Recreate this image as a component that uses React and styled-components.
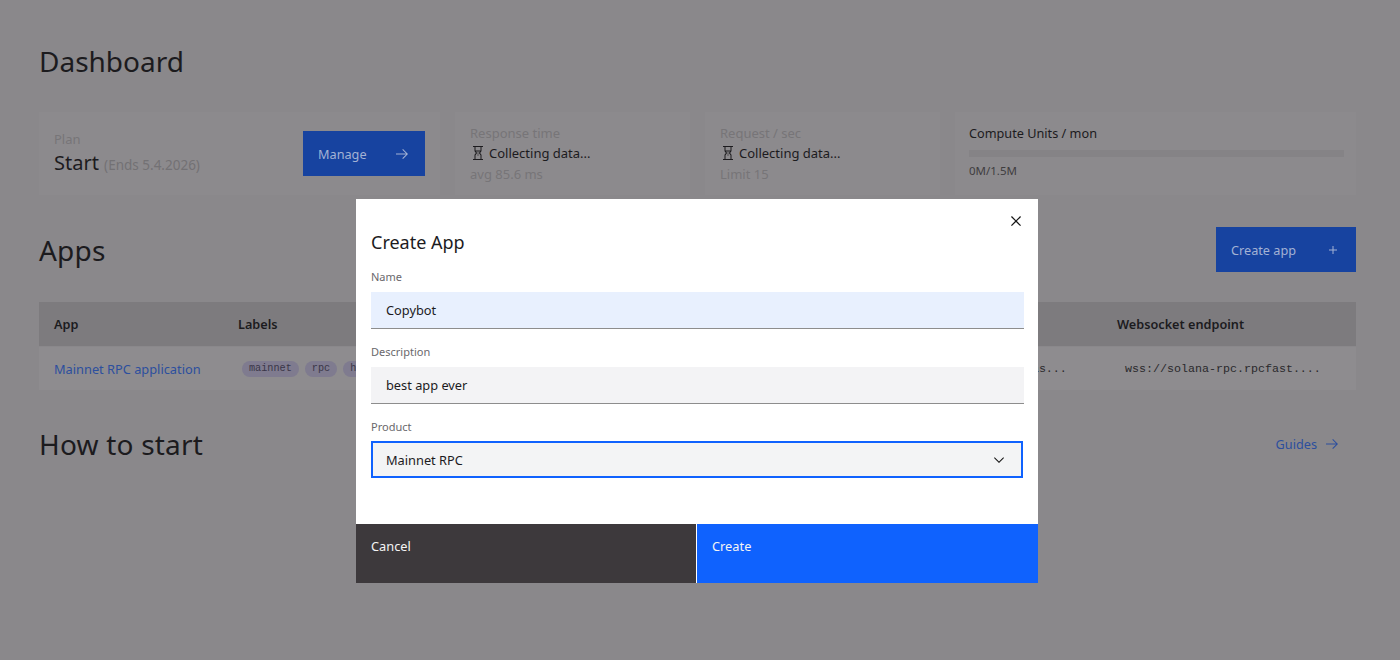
import React from "react";
import styled, { createGlobalStyle } from "styled-components";

const font = `"Noto Sans", "Liberation Sans", sans-serif`;
const mono = `"Liberation Mono", "DejaVu Sans Mono", monospace`;

const Global = createGlobalStyle`
  html, body { margin: 0; padding: 0; height: 100%; }
  body { background: #8a888b; font-family: ${font}; overflow: hidden; }
  * { box-sizing: border-box; }
`;

function Icon({ d, size = 16, color = "currentColor" }) {
  return (
    <svg width={size} height={size} viewBox="0 0 32 32" fill={color} aria-hidden="true">
      <path d={d} />
    </svg>
  );
}

const ARROW = "M18 6L16.57 7.393 24.15 15 4 15 4 17 24.15 17 16.57 24.573 18 26 28 16 18 6z";
const ADD = "M17 15V8h-2v7H8v2h7v7h2v-7h7v-2z";
const CLOSE = "M24 9.4L22.6 8 16 14.6 9.4 8 8 9.4 14.6 16 8 22.6 9.4 24 16 17.4 22.6 24 24 22.6 17.4 16 24 9.4z";
const CHEVRON = "M16 22L6 12l1.4-1.4 8.6 8.6 8.6-8.6L26 12z";
const HOURGLASS = "M15 19h2v2h-2zM15 15h2v2h-2zM23 11.67V4h3V2H6v2h3v7.67a2 2 0 00.4 1.2L11.75 16 9.4 19.13a2 2 0 00-.4 1.2V28H6v2h20v-2h-3v-7.67a2 2 0 00-.4-1.2L20.25 16l2.35-3.13a2 2 0 00.4-1.2zM21 4v7H11V4zm0 16.33V28H11v-7.67L14.25 16 12 13h8l-2.25 3z";

function App() {
  return (
    <>
      <Global />
      <Page>
        <PageTitle>Dashboard</PageTitle>
        <Stats>
          <PlanCard>
            <div>
              <Dim>Plan</Dim>
              <PlanName>
                Start <PlanEnds>(Ends 5.4.2026)</PlanEnds>
              </PlanName>
            </div>
            <BlueButton>
              Manage <Icon d={ARROW} />
            </BlueButton>
          </PlanCard>
          <Card>
            <Dim>Response time</Dim>
            <Collecting>
              <Icon d={HOURGLASS} /> Collecting data...
            </Collecting>
            <LastDim>avg 85.6 ms</LastDim>
          </Card>
          <Card>
            <Dim>Request / sec</Dim>
            <Collecting>
              <Icon d={HOURGLASS} /> Collecting data...
            </Collecting>
            <LastDim>Limit 15</LastDim>
          </Card>
          <ComputeCard>
            <ComputeTitle>Compute Units / mon</ComputeTitle>
            <Progress />
            <ComputeValue>0M/1.5M</ComputeValue>
          </ComputeCard>
        </Stats>

        <SectionHead>
          <SectionTitle>Apps</SectionTitle>
          <BlueButton $wide>
            Create app <Icon d={ADD} />
          </BlueButton>
        </SectionHead>

        <TableHead>
          <span>App</span>
          <span>Labels</span>
          <span>Http endpoint</span>
          <span>Websocket endpoint</span>
        </TableHead>
        <TableRow>
          <AppLink>Mainnet RPC application</AppLink>
          <Labels>
            <Tag>mainnet</Tag>
            <Tag>rpc</Tag>
            <Tag>http</Tag>
          </Labels>
          <Endpoint>https://solana-rpc.rpcfas...</Endpoint>
          <Endpoint>wss://solana-rpc.rpcfast....</Endpoint>
        </TableRow>

        <StartHead>
          <SectionTitle>How to start</SectionTitle>
          <Guides>
            Guides <Icon d={ARROW} />
          </Guides>
        </StartHead>
      </Page>

      <Overlay>
        <Modal>
          <ModalBody>
            <CloseButton>
              <Icon d={CLOSE} size={20} color="#161616" />
            </CloseButton>
            <ModalTitle>Create App</ModalTitle>
            <FieldLabel>Name</FieldLabel>
            <TextField $autofill>Copybot</TextField>
            <FieldLabel>Description</FieldLabel>
            <TextField>best app ever</TextField>
            <FieldLabel>Product</FieldLabel>
            <SelectField>
              Mainnet RPC
              <Icon d={CHEVRON} color="#161616" />
            </SelectField>
          </ModalBody>
          <ModalFooter>
            <FooterButton $kind="cancel">Cancel</FooterButton>
            <FooterButton $kind="create">Create</FooterButton>
          </ModalFooter>
        </Modal>
      </Overlay>
    </>
  );
}

export default App;

const Page = styled.main`
  width: 1400px;
  height: 660px;
  padding: 39px 44px 0 39px;
  color: #1c1b1e;
`;

const PageTitle = styled.h1`
  margin: 0;
  font-size: 28px;
  line-height: 45px;
  font-weight: 400;
`;

const Stats = styled.section`
  display: grid;
  grid-template-columns: 401px 235px 235px 1fr;
  gap: 15px;
  margin-top: 28px;
`;

const Card = styled.div`
  height: 83px;
  padding: 11px 15px;
  background: #8c8a8d;
  font-size: 13px;
  line-height: 20px;
`;

const PlanCard = styled(Card)`
  display: flex;
  justify-content: space-between;
  align-items: center;
  padding: 0 15px;
`;

const Dim = styled.div`
  color: #777578;
  font-size: 13px;
  line-height: 20px;
`;

const LastDim = styled(Dim)`
  margin-top: 1px;
`;

const PlanName = styled.div`
  font-size: 20px;
  line-height: 28px;
  color: #1c1b1e;
`;

const PlanEnds = styled.span`
  font-size: 13.5px;
  color: #737174;
`;

const BlueButton = styled.div`
  width: ${({ $wide }) => ($wide ? "140px" : "122px")};
  height: 45px;
  padding: 0 15px;
  display: flex;
  align-items: center;
  justify-content: space-between;
  background: #1743a0;
  color: #a3b2d4;
  font-size: 12.7px;
`;

const Collecting = styled.div`
  display: flex;
  align-items: center;
  gap: 3px;
  color: #1c1b1e;
  font-size: 13px;
  line-height: 20px;
`;

const ComputeCard = styled(Card)`
  display: flex;
  flex-direction: column;
  padding: 13px 12px 0 14px;
`;

const ComputeTitle = styled.div`
  color: #1c1b1e;
  font-size: 12.7px;
  line-height: 16px;
`;

const Progress = styled.div`
  height: 7px;
  margin: 9px 0 6px;
  background: #858386;
`;

const ComputeValue = styled.div`
  color: #3f3d40;
  font-size: 11.5px;
  line-height: 16px;
`;

const SectionHead = styled.div`
  display: flex;
  justify-content: space-between;
  align-items: center;
  margin-top: 32px;
  height: 45px;
`;

const SectionTitle = styled.h2`
  margin: 0;
  font-size: 28px;
  line-height: 40px;
  font-weight: 400;
  letter-spacing: 0.2px;
  color: #1c1b1e;
`;

const columns = `
  display: grid;
  grid-template-columns: 184px 1fr 254px 224px;
  align-items: center;
  padding: 0 15px;
`;

const TableHead = styled.div`
  ${columns}
  height: 44px;
  margin-top: 30px;
  background: #7d7b7e;
  font-size: 12.7px;
  font-weight: 600;
  color: #1c1b1e;
`;

const TableRow = styled.div`
  ${columns}
  height: 43px;
  margin-top: 1px;
  background: #8e8c8f;
  font-size: 12.8px;
`;

const AppLink = styled.span`
  color: #2c4f9e;
`;

const Labels = styled.div`
  display: flex;
  gap: 6px;
  padding-left: 4px;
`;

const Tag = styled.span`
  height: 16px;
  padding: 0 7px;
  border-radius: 8px;
  background: #7f7b8f;
  color: #3a3648;
  font-family: ${mono};
  font-size: 10.2px;
  line-height: 16px;
`;

const Endpoint = styled.span`
  padding-left: 8px;
  font-family: ${mono};
  font-size: 11.67px;
  color: #2a292c;
`;

const StartHead = styled.div`
  display: flex;
  justify-content: space-between;
  align-items: center;
  margin-top: 34px;
  height: 40px;
`;

const Guides = styled.div`
  display: flex;
  align-items: center;
  gap: 7px;
  padding-right: 16px;
  color: #2c4f9e;
  font-size: 12.7px;
`;

const Overlay = styled.div`
  position: fixed;
  inset: 0;
  padding: 199px 0 0 356px;
`;

const Modal = styled.div`
  width: 682px;
  height: 384px;
  display: flex;
  flex-direction: column;
  background: #ffffff;
`;

const ModalBody = styled.div`
  position: relative;
  flex: 1;
  padding: 31px 14px 0 15px;
`;

const CloseButton = styled.div`
  position: absolute;
  top: 12px;
  right: 12px;
  display: flex;
`;

const ModalTitle = styled.h3`
  margin: 0 0 15px;
  font-size: 18px;
  line-height: 24px;
  font-weight: 400;
  color: #1c1b1e;
`;

const FieldLabel = styled.div`
  height: 23px;
  color: #6a686c;
  font-size: 11px;
  line-height: 16px;
`;

const TextField = styled.div`
  height: 37px;
  margin-bottom: 15px;
  padding-left: 15px;
  display: flex;
  align-items: center;
  background: ${({ $autofill }) => ($autofill ? "#e8f0fe" : "#f3f3f5")};
  border-bottom: 1px solid #8d8d8d;
  color: #1c1b1e;
  font-size: 12.8px;
`;

const SelectField = styled.div`
  height: 37px;
  margin: -1px 1px 0 0;
  padding: 0 14px 0 13px;
  display: flex;
  align-items: center;
  justify-content: space-between;
  background: #f3f4f5;
  border: 2px solid #0f62fe;
  color: #1c1b1e;
  font-size: 12.8px;
`;

const ModalFooter = styled.div`
  height: 59px;
  display: grid;
  grid-template-columns: 340px 1fr;
  gap: 1px;
`;

const FooterButton = styled.div`
  padding: 14px 15px;
  background: ${({ $kind }) => ($kind === "create" ? "#0f62fe" : "#3d393c")};
  color: #f4f4f4;
  font-size: 12.8px;
  line-height: 16px;
`;
